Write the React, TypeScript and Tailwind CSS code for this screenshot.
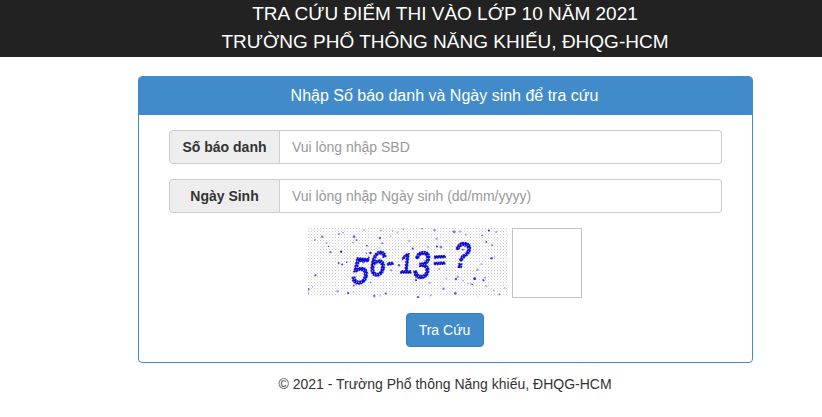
const font = "font-['Liberation_Sans',Arial,sans-serif]";

// deterministic noise for the captcha picture
function noise(count: number, seed: number) {
  const dots = [];
  let s = seed;
  const next = () => {
    s = (s * 16807) % 2147483647;
    return s / 2147483647;
  };
  for (let i = 0; i < count; i++) {
    dots.push({ x: next() * 200, y: next() * 70, r: 0.5 + next() * 0.9, o: 0.2 + next() * 0.8 });
  }
  return dots;
}

const captchaChars = [
  { c: "5", x: 42, y: 55, size: 37, rot: 4 },
  { c: "6", x: 60, y: 47, size: 35, rot: 4 },
  { c: "-", x: 79, y: 43, size: 26, rot: -8 },
  { c: "1", x: 91, y: 45, size: 28, rot: 0 },
  { c: "3", x: 104, y: 50, size: 38, rot: 0 },
  { c: "=", x: 125, y: 41, size: 26, rot: -3 },
  { c: "?", x: 144, y: 39, size: 36, rot: 3 },
];

function Captcha() {
  return (
    <svg width="200" height="70" viewBox="0 0 200 70" className="block">
      <defs>
        <pattern id="grain" width="3" height="3" patternUnits="userSpaceOnUse">
          <rect x="0" y="0" width="1" height="1" fill="#cfcfcf" />
          <rect x="1.5" y="1.5" width="1" height="1" fill="#dcdcdc" />
        </pattern>
        <pattern id="hollow" width="3" height="3" patternUnits="userSpaceOnUse">
          <rect width="3" height="3" fill="#0808cc" />
          <rect x="1" y="1" width="1.2" height="1.2" fill="#d8d8f4" />
        </pattern>
      </defs>
      <rect width="200" height="70" fill="#fff" />
      <rect width="200" height="68" fill="url(#grain)" />
      {noise(110, 4711).map((d, i) => (
        <circle key={i} cx={d.x} cy={d.y} r={d.r} fill="#1a1ad0" opacity={d.o} />
      ))}
      {captchaChars.map((ch, i) => (
        <text
          key={i}
          transform={`translate(${ch.x} ${ch.y}) rotate(${ch.rot}) skewX(-6) scale(0.82 1)`}
          fontFamily="'Liberation Sans', sans-serif"
          fontSize={ch.size}
          fill="url(#hollow)"
          stroke="#0808cc"
          strokeWidth="1.6"
          strokeDasharray="2 1"
        >
          {ch.c}
        </text>
      ))}
    </svg>
  );
}

function Field({ label, placeholder }: { label: string; placeholder: string }) {
  return (
    <div className="flex h-[34px] text-sm">
      <span className="flex w-[111px] shrink-0 items-center justify-center rounded-l border border-[#ccc] bg-[#eee] font-bold text-[#333]">
        {label}
      </span>
      <input
        placeholder={placeholder}
        className="min-w-0 flex-1 rounded-r border border-l-0 border-[#ccc] bg-white px-3 text-sm text-[#555] placeholder:text-[#999]"
      />
    </div>
  );
}

export default function App() {
  return (
    <div className={`${font} min-h-[417px] bg-white text-sm text-[#333]`}>
      <header className="h-[57px] bg-[#222] pl-[68px] text-center text-[19px] leading-[28px] text-white">
        <div>TRA CỨU ĐIỂM THI VÀO LỚP 10 NĂM 2021</div>
        <div>TRƯỜNG PHỔ THÔNG NĂNG KHIẾU, ĐHQG-HCM</div>
      </header>

      <main className="ml-[138px] w-[615px] pt-[19px]">
        <section className="overflow-hidden rounded border border-[#428bca]">
          <h1 className="flex h-[38px] items-center justify-center bg-[#428bca] pr-0.5 text-base text-white">
            Nhập Số báo danh và Ngày sinh để tra cứu
          </h1>
          <div className="flex h-[247px] flex-col gap-[15px] px-[30px] pt-[15px]">
            <Field label="Số báo danh" placeholder="Vui lòng nhập SBD" />
            <Field label="Ngày Sinh" placeholder="Vui lòng nhập Ngày sinh (dd/mm/yyyy)" />
            <div className="flex justify-center gap-1 pr-px">
              <Captcha />
              <input className="h-[70px] w-[70px] border border-[#c4c4c4] bg-white" />
            </div>
            <div className="flex justify-center pr-0.5">
              <button className="h-[34px] w-[78px] rounded border border-[#357ebd] bg-[#428bca] text-sm text-white">
                Tra Cứu
              </button>
            </div>
          </div>
        </section>
        <footer className="pt-[11px] pr-px text-center leading-5">© 2021 - Trường Phổ thông Năng khiếu, ĐHQG-HCM</footer>
      </main>
    </div>
  );
}
